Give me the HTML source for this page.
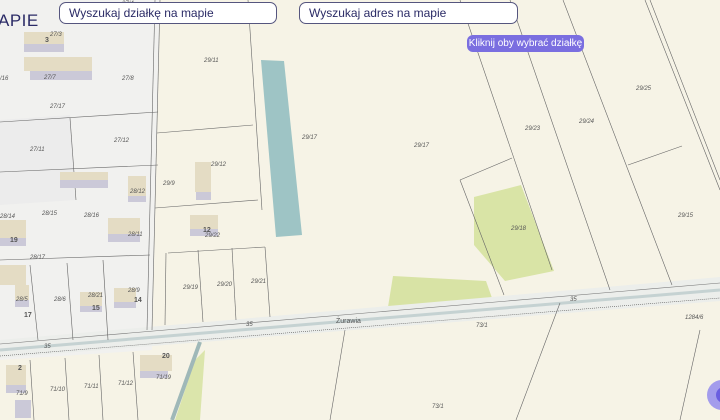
<!DOCTYPE html>
<html><head><meta charset="utf-8"><style>
html,body{margin:0;padding:0;width:720px;height:420px;overflow:hidden;background:#f6f3e6;font-family:"Liberation Sans",sans-serif}
.box{position:absolute;top:2px;height:22px;background:#fff;border:1px solid #55557e;border-radius:7px;box-sizing:border-box;font-size:12px;color:#2b2b66;line-height:20px;padding-left:9px}
.pill{position:absolute;left:467px;top:35px;width:117px;height:17px;background:#7a6ee0;border-radius:6px;color:#fff;font-size:10px;line-height:17px;text-align:center}
svg text{font-family:"Liberation Sans",sans-serif;font-size:6px;font-style:italic;fill:#555}
</style></head><body>
<svg width="720" height="420" style="position:absolute;left:0;top:0">
<rect width="720" height="420" fill="#f6f3e6"/>
<polygon points="0,0 160,0 152,350 0,360" fill="#f1f1ef"/>
<polygon points="0,120 70,115 75,200 0,205" fill="#ececec"/>
<!-- blue -->
<polygon points="261,60 284,61 302,235 276,237" fill="#9ec4c5"/>
<!-- greens -->
<polygon points="474,197 521,185 554,271 505,281 474,245" fill="#d9e4a6"/>
<polygon points="393,276 486,281 492,298 388,307" fill="#d8e3a5"/>
<polygon points="195,360 205,350 200,420 175,420" fill="#dbe5ab"/>
<!-- road -->
<polygon points="0,340 720,277 720,301 0,358" fill="#eceeeb"/>
<polyline points="0,344 720,283" stroke="#777" stroke-width="0.6" fill="none"/>
<polyline points="0,350 720,290" stroke="#c5d2d2" stroke-width="3" fill="none"/>
<polyline points="0,356 720,298" stroke="#555" stroke-width="0.6" stroke-dasharray="1,1" fill="none"/>
<polyline points="200,342 172,420" stroke="#9fb8b8" stroke-width="4" fill="none"/>
<g stroke="#666" stroke-width="0.6" fill="none">
<line x1="160" y1="0" x2="152" y2="330"/>
<line x1="155" y1="0" x2="147" y2="330"/>
<line x1="248" y1="0" x2="262" y2="210"/>
<line x1="157" y1="133" x2="253" y2="125"/>
<line x1="155" y1="208" x2="258" y2="200"/>
<line x1="168" y1="253" x2="265" y2="247"/>
<line x1="166" y1="253" x2="165" y2="325"/>
<line x1="198" y1="250" x2="203" y2="322"/>
<line x1="232" y1="248" x2="236" y2="320"/>
<line x1="265" y1="247" x2="270" y2="317"/>
<line x1="460" y1="0" x2="552" y2="270"/>
<line x1="510" y1="0" x2="610" y2="290"/>
<line x1="563" y1="0" x2="672" y2="285"/>
<line x1="645" y1="0" x2="720" y2="190"/>
<line x1="650" y1="0" x2="720" y2="180"/>
<line x1="628" y1="165" x2="682" y2="146"/>
<line x1="460" y1="180" x2="512" y2="158"/>
<line x1="460" y1="180" x2="504" y2="295"/>
<line x1="560" y1="303" x2="516" y2="420"/>
<line x1="700" y1="330" x2="680" y2="420"/>
<line x1="345" y1="330" x2="330" y2="420"/>
<line x1="0" y1="122" x2="158" y2="112"/>
<line x1="0" y1="260" x2="150" y2="255"/>
<line x1="0" y1="172" x2="158" y2="165"/>
<line x1="70" y1="118" x2="76" y2="200"/>
<line x1="30" y1="265" x2="38" y2="340"/>
<line x1="67" y1="263" x2="73" y2="340"/>
<line x1="103" y1="260" x2="108" y2="340"/>
<line x1="30" y1="360" x2="34" y2="420"/>
<line x1="65" y1="358" x2="69" y2="420"/>
<line x1="99" y1="355" x2="103" y2="420"/>
<line x1="133" y1="352" x2="138" y2="420"/>
</g>
<!-- buildings -->
<g>
<rect x="24" y="32" width="40" height="12" fill="#e4dcc4"/><rect x="24" y="44" width="40" height="8" fill="#cbc9d8"/>
<rect x="24" y="57" width="68" height="14" fill="#e4dcc4"/><rect x="30" y="71" width="62" height="9" fill="#cbc9d8"/>
<rect x="60" y="172" width="48" height="8" fill="#e4dcc4"/><rect x="60" y="180" width="48" height="8" fill="#cbc9d8"/>
<rect x="195" y="162" width="16" height="30" fill="#e4dcc4"/><rect x="196" y="192" width="15" height="8" fill="#cbc9d8"/>
<rect x="128" y="176" width="18" height="20" fill="#e4dcc4"/><rect x="128" y="196" width="18" height="6" fill="#cbc9d8"/>
<rect x="108" y="218" width="32" height="16" fill="#e4dcc4"/><rect x="108" y="234" width="32" height="8" fill="#cbc9d8"/>
<rect x="0" y="220" width="26" height="18" fill="#e4dcc4"/><rect x="0" y="238" width="26" height="8" fill="#cbc9d8"/>
<rect x="0" y="265" width="26" height="20" fill="#e4dcc4"/><rect x="15" y="285" width="14" height="22" fill="#e4dcc4"/><rect x="15" y="300" width="14" height="7" fill="#cbc9d8"/>
<rect x="80" y="292" width="22" height="14" fill="#e4dcc4"/><rect x="80" y="306" width="22" height="6" fill="#cbc9d8"/>
<rect x="114" y="288" width="22" height="14" fill="#e4dcc4"/><rect x="114" y="302" width="22" height="6" fill="#cbc9d8"/>
<rect x="190" y="215" width="28" height="14" fill="#e4dcc4"/><rect x="190" y="229" width="28" height="7" fill="#cbc9d8"/>
<rect x="140" y="355" width="32" height="16" fill="#e4dcc4"/><rect x="140" y="371" width="28" height="7" fill="#cbc9d8"/>
<rect x="6" y="365" width="20" height="20" fill="#e4dcc4"/><rect x="6" y="385" width="20" height="8" fill="#cbc9d8"/>
<rect x="15" y="400" width="16" height="18" fill="#cbc9d8"/>
</g>
<text x="50" y="36">27/3</text><text x="44" y="79">27/7</text><text x="122" y="80">27/8</text>
<text x="50" y="108">27/17</text><text x="30" y="151">27/11</text><text x="114" y="142">27/12</text>
<text x="204" y="62">29/11</text><text x="302" y="139">29/17</text><text x="414" y="147">29/17</text>
<text x="211" y="166">29/12</text><text x="163" y="185">29/9</text><text x="130" y="193">28/12</text>
<text x="636" y="90">29/25</text><text x="525" y="130">29/23</text><text x="579" y="123">29/24</text>
<text x="0" y="218">28/14</text><text x="42" y="215">28/15</text><text x="84" y="217">28/16</text>
<text x="128" y="236">28/11</text><text x="30" y="259">28/17</text><text x="205" y="237">29/22</text>
<text x="183" y="289">29/19</text><text x="217" y="286">29/20</text><text x="251" y="283">29/21</text>
<text x="511" y="230">29/18</text><text x="678" y="217">29/15</text><text x="570" y="301">35</text>
<text x="246" y="326">35</text><text x="44" y="348">35</text><text x="476" y="327">73/1</text>
<text x="685" y="319">1284/6</text><text x="432" y="408">73/1</text>
<text x="16" y="301">28/5</text><text x="54" y="301">28/6</text><text x="88" y="297">28/21</text><text x="128" y="292">28/9</text>
<text x="16" y="395">71/9</text><text x="50" y="391">71/10</text><text x="84" y="388">71/11</text><text x="118" y="385">71/12</text><text x="156" y="379">71/19</text>
<text x="0" y="80">/16</text><text x="122" y="5">27/4</text>
<text x="336" y="323" style="font-style:normal;font-size:7px">Żurawia</text>
<g style="font-style:normal;font-weight:bold;font-size:7px;fill:#333">
<text x="45" y="42" style="font-style:normal;font-size:7px;font-weight:bold">3</text>
<text x="203" y="232" style="font-style:normal;font-size:7px;font-weight:bold">12</text>
<text x="10" y="242" style="font-style:normal;font-size:7px;font-weight:bold">19</text>
<text x="24" y="317" style="font-style:normal;font-size:7px;font-weight:bold">17</text>
<text x="92" y="310" style="font-style:normal;font-size:7px;font-weight:bold">15</text>
<text x="134" y="302" style="font-style:normal;font-size:7px;font-weight:bold">14</text>
<text x="162" y="358" style="font-style:normal;font-size:7px;font-weight:bold">20</text>
<text x="18" y="370" style="font-style:normal;font-size:7px;font-weight:bold">2</text>
</g>
<circle cx="722" cy="395" r="15" fill="#8f86ee" opacity="0.8"/>
<circle cx="724" cy="395" r="8" fill="#6a5ee0"/>
</svg>
<div style="position:absolute;left:-2px;top:11px;font-size:17px;color:#2b2b66;letter-spacing:0.5px">APIE</div>
<div class="box" style="left:59px;width:218px">Wyszukaj działkę na mapie</div>
<div class="box" style="left:299px;width:219px">Wyszukaj adres na mapie</div>
<div class="pill">Kliknij oby wybrać działkę</div>
</body></html>
